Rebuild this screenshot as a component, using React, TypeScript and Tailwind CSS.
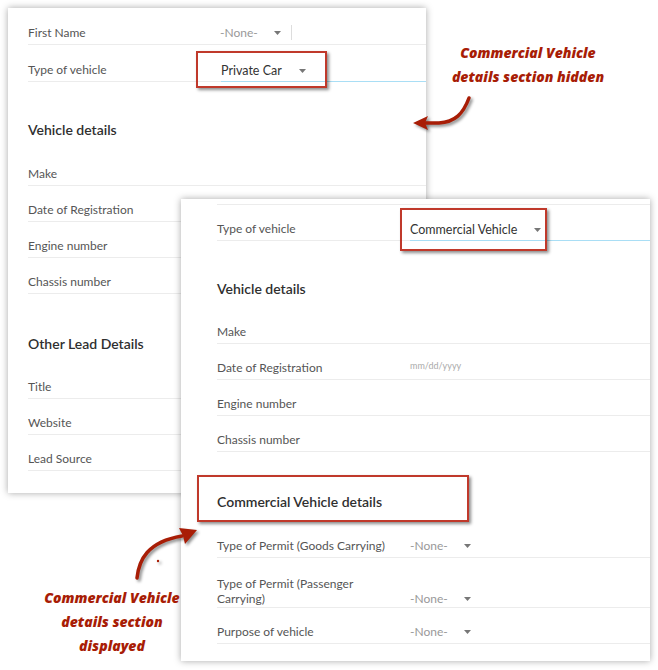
import type { ReactNode } from 'react';

const Caret = () => (
  <svg width="7" height="4" viewBox="0 0 7 4" className="shrink-0">
    <path d="M0 0h7L3.5 4z" fill="#777" />
  </svg>
);

function Row({ label, children, tall }: { label: ReactNode; children?: ReactNode; tall?: boolean }) {
  return (
    <div
      className={`flex items-end border-b border-[#ececec] ${tall ? 'h-[50px] pb-[1px]' : 'h-[36px] pb-[4px]'}`}
    >
      <div className="w-[193px] shrink-0 text-[12px] leading-[15px] text-[#555]">{label}</div>
      <div className="flex-1">{children}</div>
    </div>
  );
}

function NoneSelect() {
  return (
    <div className="flex items-center text-[12px] leading-[15px] text-[#999]">
      <span>-None-</span>
      <span className="ml-[16px]">
        <Caret />
      </span>
    </div>
  );
}

// select row with the focused (blue) underline
function VehicleTypeRow({ value, height }: { value: string; height: string }) {
  return (
    <div className={`flex items-stretch ${height}`}>
      <div className="flex w-[193px] shrink-0 items-end border-b border-[#ececec] pb-[4px] text-[12px] leading-[15px] text-[#555]">
        Type of vehicle
      </div>
      <div className="flex flex-1 items-end border-b border-[#a9def5] pb-[2px]">
        <div className="flex items-center text-[12.5px] leading-[16px] text-[#333]">
          <span>{value}</span>
          <span className="ml-[17px]">
            <Caret />
          </span>
        </div>
      </div>
    </div>
  );
}

function Heading({ children, className }: { children: ReactNode; className: string }) {
  return (
    <div className={className}>
      <h3 className="text-[14px] leading-[20px] font-semibold text-[#2f2f2f]">{children}</h3>
    </div>
  );
}

export default function App() {
  return (
    <div
      className="relative h-[670px] w-[658px] overflow-hidden bg-white"
      style={{ fontFamily: 'Lato, "Open Sans", sans-serif' }}
    >
      {/* Panel 1: Private Car selected */}
      <div className="absolute left-[8px] top-[8px] h-[485px] w-[418px] bg-white pl-[20px] pt-[1px] shadow-[0_0_7px_rgba(0,0,0,0.35)]">
        <div className="flex h-[36px] items-end border-b border-[#ececec] pb-[4px]">
          <div className="w-[192px] shrink-0 text-[12px] leading-[15px] text-[#555]">First Name</div>
          <div className="flex items-center">
            <NoneSelect />
            <div className="ml-[10px] h-[15px] w-px bg-[#ddd]" />
          </div>
        </div>
        <VehicleTypeRow value="Private Car" height="h-[37px]" />

        <Heading className="h-[68px] pt-[38px]">Vehicle details</Heading>
        <Row label="Make" />
        <Row label="Date of Registration" />
        <Row label="Engine number" />
        <Row label="Chassis number" />

        <Heading className="h-[69px] pt-[40px]">Other Lead Details</Heading>
        <Row label="Title" />
        <Row label="Website" />
        <Row label="Lead Source" />
      </div>

      {/* Panel 2: Commercial Vehicle selected */}
      <div className="absolute left-[181px] top-[199px] h-[462px] w-[469px] bg-white pl-[36px] shadow-[0_0_7px_rgba(0,0,0,0.35)]">
        <div className="h-[6px] border-b border-[#ececec]" />
        <VehicleTypeRow value="Commercial Vehicle" height="h-[36px]" />

        <Heading className="h-[67px] pt-[38px]">Vehicle details</Heading>
        <Row label="Make" />
        <Row label="Date of Registration">
          <span className="text-[9px] leading-[15px] text-[#aaa]">mm/dd/yyyy</span>
        </Row>
        <Row label="Engine number" />
        <Row label="Chassis number" />

        <Heading className="h-[70px] pt-[40px]">Commercial Vehicle details</Heading>
        <Row label="Type of Permit (Goods Carrying)">
          <NoneSelect />
        </Row>
        <Row label={<>Type of Permit (Passenger<br />Carrying)</>} tall>
          <NoneSelect />
        </Row>
        <Row label="Purpose of vehicle">
          <NoneSelect />
        </Row>
      </div>

      {/* red highlight boxes */}
      <div className="absolute left-[196px] top-[51px] h-[37px] w-[131px] border-2 border-[#c0392b] shadow-[2px_2px_3px_rgba(0,0,0,0.45)]" />
      <div className="absolute left-[400px] top-[208px] h-[43px] w-[147px] border-2 border-[#c0392b] shadow-[2px_2px_3px_rgba(0,0,0,0.45)]" />
      <div className="absolute left-[197px] top-[475px] h-[47px] w-[272px] border-2 border-[#c0392b] shadow-[2px_2px_3px_rgba(0,0,0,0.45)]" />

      {/* annotations */}
      <div
        className="absolute left-[436px] top-[41px] w-[184px] text-center text-[14px] leading-[24px] font-extrabold italic text-[#a81d06]"
        style={{ fontFamily: '"Open Sans", sans-serif' }}
      >
        Commercial Vehicle
        <br />
        details section hidden
      </div>
      <div
        className="absolute left-[30px] top-[586px] w-[164px] text-center text-[14px] leading-[24px] font-extrabold italic text-[#a81d06]"
        style={{ fontFamily: '"Open Sans", sans-serif' }}
      >
        Commercial Vehicle
        <br />
        details section
        <br />
        displayed
      </div>

      <svg
        className="absolute left-[405px] top-[92px] drop-shadow-[2px_2px_1.5px_rgba(0,0,0,0.45)]"
        width="75"
        height="45"
        viewBox="0 0 75 45"
      >
        <path d="M64 6 C58 22 50 30 34 31 L20 31" fill="none" stroke="#a81d06" strokeWidth="3.5" strokeLinecap="round" />
        <path d="M8 31 L23 24 L20 31 L23 38 Z" fill="#a81d06" />
      </svg>
      <svg
        className="absolute left-[125px] top-[515px] drop-shadow-[2px_2px_1.5px_rgba(0,0,0,0.45)]"
        width="80"
        height="72"
        viewBox="0 0 80 72"
      >
        <path d="M12 63 C14 45 22 27 57 21" fill="none" stroke="#a81d06" strokeWidth="3.5" strokeLinecap="round" />
        <path d="M72 15 L54 13 L58 21 L60 29 Z" fill="#a81d06" />
        <circle cx="33" cy="46" r="1.2" fill="#a81d06" />
      </svg>
    </div>
  );
}
